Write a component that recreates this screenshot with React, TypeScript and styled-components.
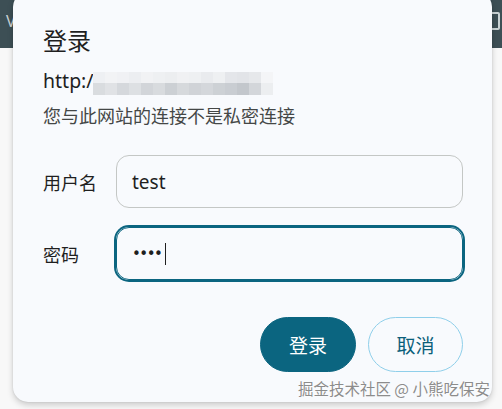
import React from "react";
import styled, { createGlobalStyle } from "styled-components";

const Global = createGlobalStyle`
  html, body { margin: 0; padding: 0; background: #f7f7f7; }
  * { box-sizing: border-box; }
`;

const FONT = `"Noto Sans", "Noto Sans CJK SC", sans-serif`;

const Page = styled.div`
  position: relative;
  width: 502px;
  height: 409px;
  overflow: hidden;
  background: #f8f8f8;
  font-family: ${FONT};
`;

const TopBar = styled.div`
  height: 48px;
  background: #3d4f55;
  display: flex;
  align-items: center;
  justify-content: space-between;
  padding: 0 2px 6px 6px;
  color: #c9d2d4;
  font-size: 16px;
`;

const BarBox = styled.div`
  width: 10px;
  height: 18px;
  border: 2px solid #c9d2d4;
  border-radius: 2px;
`;

const Dialog = styled.div`
  position: absolute;
  left: 13px;
  top: -8px;
  width: 479px;
  height: 410px;
  border-radius: 15px;
  background: #f8fafd;
  box-shadow: 0 3px 6px rgba(0, 0, 0, 0.18), 0 0 2px rgba(0, 0, 0, 0.12);
  padding: 32px 29px 30px 30px;
  display: flex;
  flex-direction: column;
`;

const Title = styled.h1`
  margin: 0;
  font-family: "Noto Sans CJK SC", sans-serif;
  font-weight: 400;
  font-size: 24px;
  line-height: 32px;
  color: #1f1f1f;
`;

const UrlRow = styled.div`
  margin-top: 10px;
  display: flex;
  align-items: center;
  height: 28px;
  font-size: 19.5px;
  color: #1f1f1f;
`;

const Mosaic = styled.div`
  display: grid;
  grid-template-columns: repeat(15, 12px);
  grid-template-rows: 11px 12px;
  margin-left: -1px;
  margin-top: 6px;
`;

const Cell = styled.div<{ $shade: string }>`
  background: ${(p) => p.$shade};
`;

const Sub = styled.div`
  margin-top: 8px;
  font-family: "Noto Sans CJK SC", sans-serif;
  font-size: 18px;
  line-height: 26px;
  color: #444746;
`;

const Form = styled.div`
  margin-top: 27px;
  display: flex;
  flex-direction: column;
  gap: 19px;
`;

const Row = styled.div`
  display: flex;
  align-items: center;
`;

const Label = styled.div`
  width: 73px;
  flex: none;
  font-family: "Noto Sans CJK SC", sans-serif;
  font-size: 18px;
  color: #1f1f1f;
`;

const Field = styled.div<{ $focused?: boolean }>`
  flex: 1;
  height: 53px;
  border-radius: 13px;
  border: 1px solid ${(p) => (p.$focused ? "#0b6580" : "#c4c7c5")};
  box-shadow: ${(p) => (p.$focused ? "0 0 0 2px #0b6580" : "none")};
  display: flex;
  align-items: center;
  padding-left: 15px;
  font-size: 19px;
  color: #1f1f1f;
`;

const Dots = styled.span`
  font-family: "DejaVu Sans", sans-serif;
  font-size: 15px;
  letter-spacing: -1.5px;
  color: #1f1f1f;
`;

const Caret = styled.span`
  display: inline-block;
  width: 1px;
  height: 22px;
  background: #1f1f1f;
  margin-left: 4px;
`;

const Actions = styled.div`
  margin-top: 37px;
  display: flex;
  justify-content: flex-end;
  gap: 12px;
`;

const Button = styled.button<{ $primary?: boolean }>`
  width: ${(p) => (p.$primary ? "96px" : "95px")};
  height: 55px;
  border-radius: 28px;
  font-family: "Noto Sans CJK SC", sans-serif;
  font-size: 19px;
  cursor: pointer;
  background: ${(p) => (p.$primary ? "#0b6580" : "transparent")};
  color: ${(p) => (p.$primary ? "#ffffff" : "#0b5f7a")};
  border: 1px solid ${(p) => (p.$primary ? "#0b6580" : "#8fcfea")};
`;

const Watermark = styled.div`
  position: absolute;
  right: 12px;
  top: 377px;
  font-family: "Noto Sans CJK SC", sans-serif;
  font-size: 15.5px;
  color: #8c8c8c;
  text-shadow: 0 0 1px #fff, 0 0 1px #fff, 0 0 2px #fff;
  white-space: nowrap;
`;

const top = ["#eef0f3", "#f2f3f5", "#f0f1f4", "#eceef1", "#f1f2f4", "#eef0f2", "#eceef0", "#f0f1f3", "#eef0f2", "#e9ebee", "#eef0f2", "#e4e6ea", "#e2e4e8", "#e6e8eb", "#f4f5f7"];
const bottom = ["#d9dcdf", "#e0e2e5", "#d5d8dc", "#dde0e3", "#d2d5d9", "#d8dbde", "#ccd0d4", "#d6d9dc", "#d0d3d7", "#d4d7db", "#cdd1d5", "#c9cdd2", "#c3c7cc", "#d3d6da", "#eceef0"];

export default function App() {
  return (
    <>
      <Global />
      <Page>
        <TopBar>
          <span>V</span>
          <BarBox />
        </TopBar>
        <Dialog>
          <Title>登录</Title>
          <UrlRow>
            http:/
            <Mosaic>
              {top.map((c, i) => (
                <Cell key={"t" + i} $shade={c} />
              ))}
              {bottom.map((c, i) => (
                <Cell key={"b" + i} $shade={c} />
              ))}
            </Mosaic>
          </UrlRow>
          <Sub>您与此网站的连接不是私密连接</Sub>
          <Form>
            <Row>
              <Label>用户名</Label>
              <Field>test</Field>
            </Row>
            <Row>
              <Label>密码</Label>
              <Field $focused>
                <Dots>••••</Dots>
                <Caret />
              </Field>
            </Row>
          </Form>
          <Actions>
            <Button $primary>登录</Button>
            <Button>取消</Button>
          </Actions>
        </Dialog>
        <Watermark>掘金技术社区 @ 小熊吃保安</Watermark>
      </Page>
    </>
  );
}
